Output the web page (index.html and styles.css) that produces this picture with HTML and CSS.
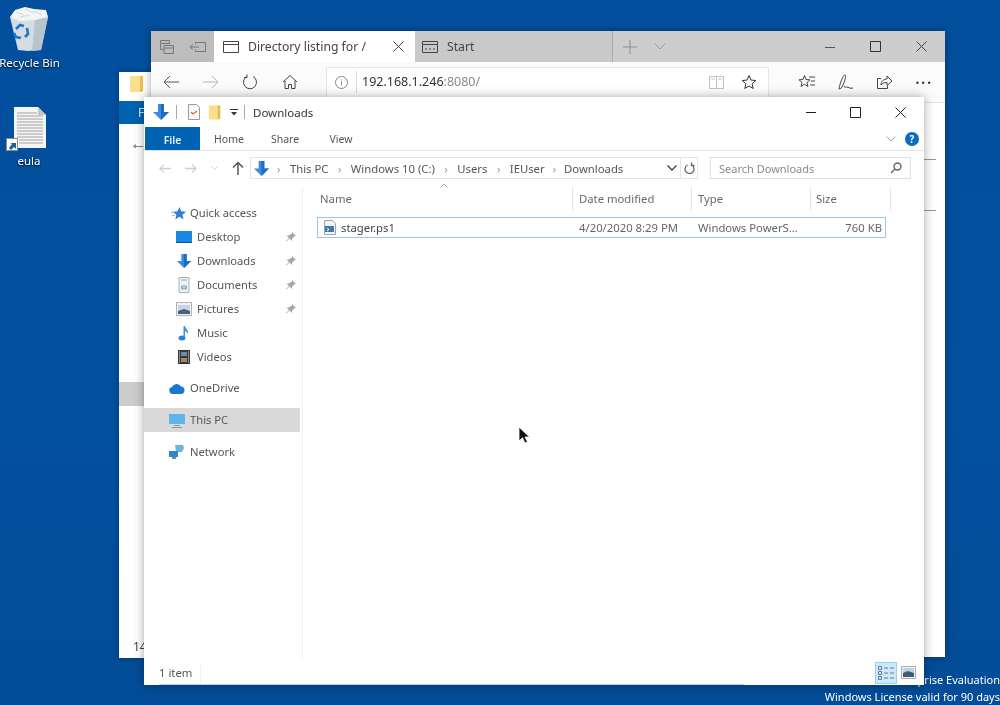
FILE: index.html
```html
<!DOCTYPE html>
<html lang="en">
<head>
<meta charset="utf-8">
<title>Downloads</title>
<link rel="stylesheet" href="styles.css">
</head>
<body>
<svg class="defs" width="0" height="0" aria-hidden="true">
  <defs>
    <symbol id="dl" viewBox="0 0 18 18"><path d="M6 1h6v8h5l-8 8-8-8h5z" fill="#3c8be0"/><path d="M9 1h3v8h5l-8 8z" fill="#1f6cc4"/></symbol>
    <symbol id="pin" viewBox="0 0 12 12"><path d="M7 1l4 4-2 .5-2 2.500-.2 2L4.500 7.500 1.500 10.500 1 10l3-3-2.400-2.300 2-.2L7 2.500z" fill="#a5a5a5"/></symbol>
    <symbol id="folder" viewBox="0 0 16 18"><path d="M1 1h13v15l-3 1H1z" fill="#fbdf8c"/><path d="M11 1h3v15l-3 1z" fill="#e9bd50"/></symbol>
  </defs>
</svg>

<div class="desktop">
  <div class="desk-icon bin">
    <svg width="44" height="48" viewBox="0 0 44 48">
      <path d="M2 10l8 33 10 1 13-1 7-33z" fill="#d5dce2"/>
      <path d="M27 12l13-2-7 33-9 1z" fill="#b9c4cc"/>
      <path d="M2 10l5-7 10-3 9 2 12 1 2 7-13 3-15 1z" fill="#f2f4f5"/>
      <path d="M8 5l8 3M17 2l9 4M26 4l8 4M12 10l10-2" stroke="#d3d8dc" fill="none"/>
      <path d="M8 22l4-4 4 1M19 21l1 6-3 3M13 31l-5-1-2-4" fill="none" stroke="#1f76c6" stroke-width="2.600"/>
    </svg>
    <span>Recycle Bin</span>
  </div>
  <div class="desk-icon eula">
    <svg width="50" height="48" viewBox="0 0 50 48">
      <path d="M9 1h24l8 8v33H9z" fill="#f5f5f5"/><path d="M33 1l8 8h-8z" fill="#c4c4c4"/>
      <path d="M12 7h20M12 10h26M12 13h26M12 16h26M12 19h26M12 22h26M12 25h26M12 28h26M12 31h26M14 34h24M14 37h24" stroke="#a2a2a2"/>
      <rect x="1.500" y="32.500" width="11" height="12" fill="#fff" stroke="#8a8a8a"/><path d="M4 42l3-4-2-1h6v6l-2-2-3 3z" fill="#1f5fa8"/>
    </svg>
    <span>eula</span>
  </div>

  <div class="watermark"><div>Windows 10 Enterprise Evaluation</div><div>Windows License valid for 90 days</div></div>

  <section class="win back-win">
    <div class="back-title"><svg width="16" height="18"><use href="#folder"/></svg></div>
    <div class="back-file">F</div>
    <div class="back-arrow">←</div>
    <div class="back-sel"></div>
    <div class="back-count">14</div>
  </section>

  <section class="win browser">
    <div class="tabstrip">
      <div class="tab-tools">
        <svg width="16" height="16" viewBox="0 0 16 16" fill="none" stroke="#777"><path d="M1.500 1.500h9v3h-9zM1.500 4.500v6h3M5 6.500h9.500v8H5zM5 9h9.500"/></svg>
        <svg width="18" height="16" viewBox="0 0 18 16" fill="none" stroke="#777"><path d="M6.500 3.500h10v9h-10v-2M6.500 5.500v-2M10 8H1M4 5.500L1 8l3 2.500"/></svg>
      </div>
      <div class="tab active">
        <svg width="16" height="14" viewBox="0 0 16 14" fill="none" stroke="#444"><path d="M.5 1.500h15v11H.5zM.5 4.500h15"/></svg>
        <span class="tab-name">Directory listing for /</span>
        <svg class="tab-x" width="11" height="11" viewBox="0 0 11 11" stroke="#444"><path d="M.5.500l10 10M10.500.5l-10 10"/></svg>
      </div>
      <div class="tab idle">
        <svg width="16" height="14" viewBox="0 0 16 14" fill="none" stroke="#444"><path d="M.5 1.500h15v11H.5zM.5 4.500h15M3 9h2M7 9h2M11 9h2"/></svg>
        <span>Start</span>
      </div>
      <div class="tab-new">
        <svg width="14" height="14" viewBox="0 0 14 14" stroke="#8d8d8d"><path d="M7 0v14M0 7h14"/></svg>
        <svg width="12" height="7" viewBox="0 0 12 7" fill="none" stroke="#9a9a9a"><path d="M.5.500L6 6l5.500-5.500"/></svg>
      </div>
      <div class="caption">
        <svg width="10" height="12" viewBox="0 0 10 12" stroke="#555"><path d="M0 6.500h10"/></svg>
        <svg width="11" height="11" viewBox="0 0 11 11" fill="none" stroke="#333"><path d="M.5.500h10v10H.5z"/></svg>
        <svg width="11" height="11" viewBox="0 0 11 11" stroke="#444"><path d="M.5.500l10 10M10.500.5l-10 10"/></svg>
      </div>
    </div>
    <div class="toolbar">
      <div class="nav-btns">
        <svg width="16" height="14" viewBox="0 0 16 14" fill="none" stroke="#555"><path d="M16 7H1M7 1L1 7l6 6"/></svg>
        <svg width="16" height="14" viewBox="0 0 16 14" fill="none" stroke="#b5b5b5"><path d="M0 7h15M9 1l6 6-6 6"/></svg>
        <svg width="16" height="16" viewBox="0 0 16 16" fill="none" stroke="#444"><path d="M5 2.500a6.500 6.500 0 1 0 6 0M5 .5v3H2"/></svg>
        <svg width="16" height="16" viewBox="0 0 16 16" fill="none" stroke="#444"><path d="M1 8l7-6.500L15 8M3 6.500v8h3.500v-4h3v4H13v-8"/></svg>
      </div>
      <div class="urlbar">
        <svg class="info" width="13" height="13" viewBox="0 0 13 13" fill="none" stroke="#888"><circle cx="6.500" cy="6.500" r="6"/><path d="M6.500 5.500v4M6.500 3.500v1"/></svg>
        <span class="url">192.168.1.246<span class="port">:8080/</span></span>
        <svg class="book" width="15" height="13" viewBox="0 0 15 13" fill="none" stroke="#c2c2c2"><path d="M.5.500h14v12H.5zM7.500.5v12M2 3h4M9 3h4"/></svg>
        <svg class="star" width="16" height="16" viewBox="0 0 16 16" fill="none" stroke="#333"><path d="M8 1.500l2 4.600 4.800.4-3.700 3.200 1.100 4.800L8 12l-4.200 2.500 1.100-4.800L1.200 6.500 6 6.100z"/></svg>
      </div>
      <div class="tool-right">
        <svg width="18" height="16" viewBox="0 0 18 16" fill="none" stroke="#444"><path d="M6.500 1.500l1.500 4 4 .3-3 2.700 1 4-3.500-2.300-3.500 2.300 1-4-3-2.700 4-.3zM11 3h6M13 7h4M12 11h5"/></svg>
        <svg width="16" height="17" viewBox="0 0 16 17" fill="none" stroke="#444"><path d="M1 15C2 9 5 1 7 1c1.500 0 0 6-3 12-1 2-3 2-3 2zM6 12c1 2 2 1 3 1s3 2 6 1"/></svg>
        <svg width="17" height="16" viewBox="0 0 17 16" fill="none" stroke="#444"><path d="M5 4.500H1.500v10h10V12M5 11c0-4 3-6 6-6V2l5 5-5 4.500V8.500c-3 0-5 1-6 2.500z"/></svg>
        <span class="dots">···</span>
      </div>
    </div>
    <div class="browser-page">
      <div class="page-rule first"></div>
      <div class="page-rule second"></div>
    </div>
  </section>

  <section class="win explorer">
    <header class="ex-title">
      <svg width="18" height="18"><use href="#dl"/></svg>
      <i class="qsep first"></i>
      <svg width="14" height="16" viewBox="0 0 14 16" fill="none"><path d="M1.500.5h8l3 3v12h-11z" fill="#fafafa" stroke="#9a9a9a"/><path d="M4 8l2 2 4-3" stroke="#d26a3a" stroke-width="1.200"/></svg>
      <svg width="14" height="17" viewBox="0 0 16 18"><use href="#folder"/></svg>
      <svg class="qdrop" width="8" height="7" viewBox="0 0 8 7"><path d="M0 0h8v1H0zM1 3h6L4 6.500z" fill="#333"/></svg>
      <i class="qsep"></i>
      <span class="ex-name">Downloads</span>
      <div class="caption ex-caption">
        <svg width="10" height="12" viewBox="0 0 10 12" stroke="#222"><path d="M0 6.500h10"/></svg>
        <svg width="11" height="11" viewBox="0 0 11 11" fill="none" stroke="#222"><path d="M.5.500h10v10H.5z"/></svg>
        <svg width="11" height="11" viewBox="0 0 11 11" stroke="#222"><path d="M.5.500l10 10M10.500.5l-10 10"/></svg>
      </div>
    </header>
    <nav class="ribbon">
      <span class="rtab file">File</span>
      <span class="rtab">Home</span>
      <span class="rtab">Share</span>
      <span class="rtab">View</span>
      <svg class="collapse" width="10" height="6" viewBox="0 0 10 6" fill="none" stroke="#a8a8a8"><path d="M.5.500L5 5 9.500.5"/></svg>
      <span class="help">?</span>
    </nav>
    <div class="addr">
      <div class="addr-nav">
        <svg width="12" height="11" viewBox="0 0 13 11" fill="none" stroke="#d0d0d0" stroke-width="1.400"><path d="M13 5.500H1M5.500 1L1 5.500 5.500 10"/></svg>
        <svg width="12" height="11" viewBox="0 0 13 11" fill="none" stroke="#d0d0d0" stroke-width="1.400"><path d="M0 5.500h12M7.500 1L12 5.500 7.500 10"/></svg>
        <svg width="7" height="4" viewBox="0 0 7 4" fill="none" stroke="#d0d0d0"><path d="M.5.500l3 3 3-3"/></svg>
        <svg width="12" height="14" viewBox="0 0 12 14" fill="none" stroke="#555" stroke-width="1.500"><path d="M6 14V1.500M1 6.500l5-5 5 5"/></svg>
      </div>
      <div class="crumbs">
        <svg width="17" height="17"><use href="#dl"/></svg>
        <span class="sep lead">›</span><span>This PC</span>
        <span class="sep">›</span><span>Windows 10 (C:)</span>
        <span class="sep">›</span><span>Users</span>
        <span class="sep">›</span><span>IEUser</span>
        <span class="sep tight">›</span><span>Downloads</span>
        <svg class="crumb-drop" width="10" height="6" viewBox="0 0 10 6" fill="none" stroke="#444" stroke-width="1.400"><path d="M.5.500L5 5 9.500.5"/></svg>
        <span class="refresh"><svg width="11" height="12" viewBox="0 0 11 12" fill="none" stroke="#666" stroke-width="1.300"><path d="M3.500 3a4.500 4.500 0 1 0 4 0M7.500.5V3.500H10.500"/></svg></span>
      </div>
      <div class="search">
        <span>Search Downloads</span>
        <svg width="12" height="12" viewBox="0 0 12 12" fill="none" stroke="#666" stroke-width="1.400"><circle cx="7.500" cy="4.500" r="3.500"/><path d="M5 7l-4 4"/></svg>
      </div>
    </div>
    <div class="ex-body">
      <aside class="side">
        <div class="side-item quick"><svg width="15" height="15" viewBox="0 0 16 16"><path d="M9 1l2 4.500 5 .5-3.700 3.300 1.100 5L9 11.500l-4.400 2.800 1.100-5L2 6l5-.5z" fill="#2f7fd3"/><path d="M0 7h4M1 10h3" stroke="#7fb2e6"/></svg><span>Quick access</span></div>
        <div class="side-item sub"><svg width="16" height="14" viewBox="0 0 16 14"><path d="M0 1h16v11H0z" fill="#1d87e6"/><path d="M0 12h16v1H0z" fill="#0e4f90"/></svg><span>Desktop</span><svg class="pin" width="12" height="12"><use href="#pin"/></svg></div>
        <div class="side-item sub"><svg width="16" height="16"><use href="#dl"/></svg><span>Downloads</span><svg class="pin" width="12" height="12"><use href="#pin"/></svg></div>
        <div class="side-item sub"><svg width="16" height="16" viewBox="0 0 16 16"><path d="M3 .5h10v15H3z" fill="#eef1f4" stroke="#a9b1b8"/><path d="M5.500 3h5M5.500 9h5v3h-5z" stroke="#86a5c2" fill="#bcd0e2"/></svg><span>Documents</span><svg class="pin" width="12" height="12"><use href="#pin"/></svg></div>
        <div class="side-item sub"><svg width="16" height="14" viewBox="0 0 16 14"><path d="M.5.500h15v13H.5z" fill="#f3f3f3" stroke="#b1b1b1"/><path d="M2 3h12v6H2z" fill="#c4d7e8"/><path d="M2 9l6-2 6 2v3H2z" fill="#45627d"/></svg><span>Pictures</span><svg class="pin" width="12" height="12"><use href="#pin"/></svg></div>
        <div class="side-item sub"><svg width="16" height="16" viewBox="0 0 16 16"><ellipse cx="6" cy="13" rx="3.500" ry="2.500" fill="#2c7fd2"/><path d="M7.500 1h1.500c.5 3 4 4 2.500 8-.5-2-2-3-2.500-3v7h-1.500z" fill="#3b93e0"/></svg><span>Music</span></div>
        <div class="side-item sub"><svg width="16" height="16" viewBox="0 0 16 16"><path d="M2 1h12v14H2z" fill="#33383c"/><path d="M5 3h6v4H5z" fill="#6e8ba0"/><path d="M5 9h6v4H5z" fill="#a6895c"/><path d="M3 2h1v12H3zM12 2h1v12h-1z" fill="#c9c9c9" opacity=".6"/></svg><span>Videos</span></div>
        <div class="side-item top first-group"><svg width="16" height="11" viewBox="0 0 16 11"><path d="M3.500 11a3.500 3.500 0 0 1-.5-6.900A5 5 0 0 1 12 3.500a3.800 3.800 0 0 1 .5 7.500z" fill="#1b78cf"/></svg><span>OneDrive</span></div>
        <div class="side-item top group selected"><svg width="16" height="15" viewBox="0 0 16 15"><path d="M0 1h16v10H0z" fill="#5fb5ea"/><path d="M5 12h6v1H5zM3 14h10v1H3z" fill="#8b969e"/></svg><span>This PC</span></div>
        <div class="side-item top group"><svg width="16" height="16" viewBox="0 0 16 16"><path d="M6 1h8l1 3-2 4H7z" fill="#6cb3e6"/><path d="M0 7h9v6H0z" fill="#2f86cf"/><path d="M3 13h4v2H3z" fill="#7a8791"/></svg><span>Network</span></div>
      </aside>
      <main class="files">
        <div class="sort-caret"><svg width="8" height="5" viewBox="0 0 8 5" fill="none" stroke="#a9a9a9"><path d="M.5 4.500L4 1l3.500 3.500"/></svg></div>
        <div class="cols">
          <span class="c-name">Name</span><span class="c-date">Date modified</span><span class="c-type">Type</span><span class="c-size">Size</span>
        </div>
        <div class="row">
          <span class="c-name"><svg width="14" height="15" viewBox="0 0 14 15"><path d="M1.500.5h8l3 3v11h-11z" fill="#f4f4f4" stroke="#9aa4ad"/><path d="M2 6h9v6H2z" fill="#3f78b7"/><path d="M4 8l2 1.500L4 11" stroke="#fff" fill="none"/></svg>stager.ps1</span><span class="c-date">4/20/2020 8:29 PM</span><span class="c-type">Windows PowerS...</span><span class="c-size num">760 KB</span>
        </div>
      </main>
    </div>
    <footer class="status">
      <span class="count">1 item</span>
      <div class="views">
        <span class="view on"><svg width="18" height="16" viewBox="0 0 18 16" fill="none" stroke="#6d7a85"><path d="M1.500 1.500h3v3h-3zM1.500 6.500h3v3h-3zM1.500 11.500h3v3h-3zM7 3h4M13 3h4M7 8h4M13 8h4M7 13h4M13 13h4"/></svg></span>
        <span class="view"><svg width="15" height="13" viewBox="0 0 15 13"><path d="M.5.500h14v12H.5z" fill="#f2f2f2" stroke="#aeaeae"/><path d="M2 2h11v5H2z" fill="#bcd3e6"/><path d="M2 7l5-2 6 2v4H2z" fill="#3f5d78"/></svg></span>
      </div>
    </footer>
  </section>

  <svg class="cursor" width="12" height="18" viewBox="0 0 12 18"><path d="M1 1v14l3.500-3.200L7 17l2.500-1-2.500-5h4.500z" fill="#111" stroke="#fff" stroke-width=".8"/></svg>
</div>
</body>
</html>
```

FILE: styles.css
```css
* { box-sizing: border-box; }
html, body { margin: 0; padding: 0; height: 100%; overflow: hidden; }
body { font-family: "Noto Sans", "Open Sans", sans-serif; font-size: 12px; color: #444; }
.defs { position: absolute; }
svg { display: block; flex: none; }
.desktop { position: relative; width: 1000px; height: 705px; overflow: hidden; background: linear-gradient(180deg, #024f9d 0%, #03509f 60%, #034c97 100%); filter: blur(.35px); }

.desk-icon { position: absolute; left: -8px; width: 76px; display: flex; flex-direction: column; align-items: center; color: #fff; font-size: 11.500px; text-shadow: 0 1px 2px #000; white-space: nowrap; }
.desk-icon span { margin-left: -1px; }
.desk-icon.bin { top: 7px; }
.desk-icon.eula { top: 106px; }
.desk-icon.eula span { margin-top: -1px; margin-left: -2px; }

.watermark { position: absolute; right: 0; top: 671px; text-align: right; color: #fff; font-size: 11px; line-height: 17px; white-space: nowrap; }

.win { position: absolute; background: #fff; }
.back-win { left: 119px; top: 72px; width: 500px; height: 586px; box-shadow: 0 0 6px rgba(0,0,0,.3); }
.back-title { height: 29px; padding: 3px 0 0 10px; }
.back-file { width: 40px; height: 23px; background: #0063b1; color: #dbe7f3; padding: 3px 0 0 19px; }
.back-arrow { font-size: 17px; color: #666; line-height: 22px; padding: 8px 0 0 11px; }
.back-sel { position: absolute; left: 0; top: 310px; width: 30px; height: 24px; background: #ccc; }
.back-count { position: absolute; left: 14px; top: 566px; }

.browser { left: 151px; top: 31px; width: 794px; height: 626px; display: flex; flex-direction: column; box-shadow: 0 0 8px rgba(0,0,0,.35); }
.tabstrip { height: 31px; background: #cdcdcd; display: flex; align-items: center; flex: none; }
.tab-tools { width: 63px; height: 31px; background: #bdbdbd; display: flex; align-items: center; gap: 14px; padding-left: 8px; }
.tab { height: 31px; display: flex; align-items: center; font-size: 12.200px; }
.tab.active { width: 201px; background: #fff; padding-left: 9px; }
.tab-name { margin-left: 9px; flex: 1; }
.tab-x { margin-right: 11px; }
.tab.idle { width: 198px; padding-left: 7px; gap: 9px; border-right: 1px solid #aaa; background: #c9c9c9; }
.tab-new { display: flex; align-items: center; gap: 17px; padding-left: 10px; }
.caption { margin-left: auto; display: flex; align-items: center; gap: 35px; padding-right: 18px; }

.toolbar { height: 41px; display: flex; align-items: center; flex: none; border-bottom: 1px solid #e3e3e3; background: #fbfbfb; }
.nav-btns { display: flex; align-items: center; gap: 23.500px; padding-left: 12px; width: 175px; }
.urlbar { width: 443px; height: 31px; border: 1px solid #e6e6e6; background: #fff; display: flex; align-items: center; font-size: 12.500px; padding-left: 8px; }
.info { margin-right: 8px; }
.url { padding-left: 5px; border-left: 1px solid #d8d8d8; line-height: 22px; flex: 1; color: #333; }
.port { color: #8a8a8a; }
.book { margin-right: 17px; }
.star { margin-right: 11px; }
.tool-right { display: flex; align-items: center; gap: 22px; padding-left: 29px; }
.dots { font-size: 18px; letter-spacing: 1px; color: #333; line-height: 16px; }
.browser-page { flex: 1; position: relative; }
.page-rule { position: absolute; right: 9px; width: 12px; height: 1px; background: #999; }
.page-rule.first { top: 56px; }
.page-rule.second { top: 107px; }

.explorer { left: 144px; top: 97px; width: 780px; height: 588px; display: flex; flex-direction: column; box-shadow: 0 0 10px rgba(0,0,0,.35); }
.ex-title { height: 30px; display: flex; align-items: center; padding-left: 8px; flex: none; color: #333; }
.qsep { width: 1px; height: 14px; background: #aaa; margin: 0 8px 0 4px; }
.qsep.first { margin: 0 10px 0 6px; }
.ex-title svg + svg { margin-left: 7px; }
.qdrop { margin-left: 8px !important; margin-right: 2px; }
.ex-name { font-size: 11.500px; }
.ex-caption { gap: 34px; }
.ex-title .ex-caption svg + svg { margin-left: 0; }
.ribbon { height: 24px; flex: none; display: flex; align-items: center; padding-left: 1px; border-bottom: 1px solid #e4e4e4; font-size: 10.500px; color: #555; }
.rtab { width: 54px; text-align: center; margin-right: 2px; line-height: 28px; }
.rtab.file { width: 55px; height: 23px; line-height: 26px; background: #0063b1; color: #e8f0f8; font-weight: 600; }
.collapse { margin-left: auto; margin-right: 9px; }
.help { width: 14px; height: 14px; border-radius: 50%; background: #0b6cc0; color: #fff; font-weight: 700; font-size: 10px; line-height: 14px; text-align: center; margin: 1px 5px 0 0; }

.addr { height: 36px; flex: none; display: flex; align-items: flex-start; padding-top: 6px; }
.addr-nav { width: 106px; height: 22px; display: flex; align-items: center; gap: 14px; padding-left: 15px; flex: none; }
.crumbs { width: 448px; height: 22px; flex: none; border: 1px solid #e5e5e5; display: flex; align-items: center; font-size: 11.300px; color: #555; padding-left: 2px; }
.crumbs .sep { color: #999; margin: 0 9.500px; font-size: 11px; }
.crumbs .sep.lead { margin-left: 7px; }
.crumbs .sep.tight { margin: 0 8px; }
.crumb-drop { margin-left: auto; margin-right: 3px; }
.refresh { width: 17px; height: 20px; border-left: 1px solid #e5e5e5; display: flex; align-items: center; justify-content: center; }
.search { width: 201px; height: 22px; flex: none; margin-left: 12px; border: 1px solid #e0e0e0; display: flex; align-items: center; justify-content: space-between; padding: 0 8px; font-size: 11px; color: #8a8a8a; }

.ex-body { flex: 1; display: flex; min-height: 0; }
.side { width: 156px; flex: none; padding-top: 14px; font-size: 11.200px; color: #555; }
.side-item { height: 24px; display: flex; align-items: center; gap: 5px; }
.side-item span { margin-top: -2px; }
.side-item.quick { padding-left: 27px; gap: 4px; }
.side-item.sub { padding-left: 32px; }
.side-item.top { padding-left: 25px; }
.side-item.first-group { margin-top: 7px; }
.side-item.group { margin-top: 8px; }
.side-item.selected { background: #d9d9d9; }
.pin { margin-left: auto; margin-right: 3px; }
.files { flex: 1; border-left: 1px solid #f0f0f0; margin-left: 2px; padding-left: 14px; position: relative; font-size: 11.300px; color: #666; }
.sort-caret { position: absolute; left: 137px; top: -4px; }
.cols { display: flex; height: 24px; align-items: center; color: #6a6a6a; }
.cols span { height: 24px; line-height: 24px; border-right: 1px solid #e6e6e6; color: #6a6a6a; }
.row { display: flex; height: 21px; margin-top: 6px; border: 1px solid #95c9ec; width: 569px; align-items: center; }
.c-name { width: 256px; display: flex; align-items: center; padding-left: 3px; color: #444; }
.row .c-name svg { margin-right: 4px; }
.c-date, .c-type { width: 119px; padding-left: 6px; white-space: nowrap; }
.c-size { width: 80px; padding-left: 5px; }
.row .c-name { padding-left: 5px; width: 255px; }
.row .c-size { width: 74px; }
.num { text-align: right; padding-right: 3px; }
.status { height: 26px; flex: none; display: flex; align-items: center; justify-content: space-between; padding: 1px 8px 0 15px; color: #555; font-size: 11.300px; position: relative; }
.status::after { content: ""; position: absolute; left: 15px; right: 180px; bottom: 0; height: 1px; background: #bcd3e8; }
.count { padding-right: 8px; border-right: 1px solid #f0f0f0; line-height: 20px; }
.views { display: flex; align-items: center; gap: 4px; }
.view { height: 22px; display: flex; align-items: center; justify-content: center; }
.view.on { width: 22px; background: #cce8ff; border: 1px solid #9bd0f5; }
.cursor { position: absolute; left: 518px; top: 426px; }
```
